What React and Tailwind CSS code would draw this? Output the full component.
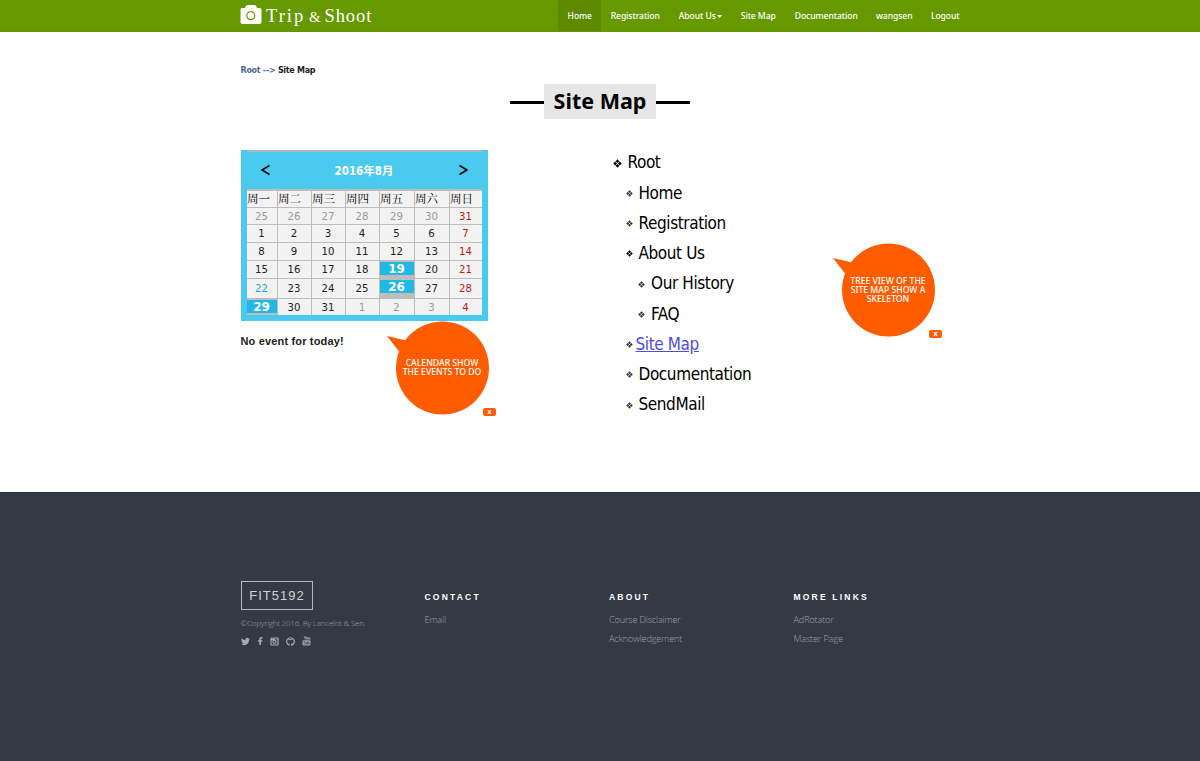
import { FaTwitter, FaFacebookF } from "react-icons/fa";

const NAV = [
  ["Home", "w-[43px] bg-[#5c8a00]"],
  ["Registration", "w-[68px]"],
  ["About Us", "w-[62px]"],
  ["Site Map", "w-[54px]"],
  ["Documentation", "w-[82px]"],
  ["wangsen", "w-[54px]"],
  ["Logout", "w-[48px]"],
];

const WEEKS = [
  { h: "h-[16px]", days: [25, 26, 27, 28, 29, 30, 31] },
  { h: "h-[17px]", days: [1, 2, 3, 4, 5, 6, 7] },
  { h: "h-[17px]", days: [8, 9, 10, 11, 12, 13, 14] },
  { h: "h-[17px]", days: [15, 16, 17, 18, 19, 20, 21] },
  { h: "h-[19px]", days: [22, 23, 24, 25, 26, 27, 28] },
  { h: "h-[16px]", days: [29, 30, 31, 1, 2, 3, 4] },
];
const HEAD = ["周一", "周二", "周三", "周四", "周五", "周六", "周日"];
const EVENTS = ["3-4", "4-4", "5-0"];

function dayClass(w, d) {
  if (d === 6) return "text-[#c01818]";
  if ((w === 0 && d < 6) || (w === 5 && d > 2)) return "text-[#999]";
  if (w === 4 && d === 0) return "text-[#1ba5dc]";
  return "text-[#222]";
}

function Calendar() {
  return (
    <div className="flex h-[171px] w-[247px] flex-col bg-[#4bcaf0] pl-[6px] pr-[6px]">
      <div className="h-[1.500px] bg-[#a9b9bf]" />
      <div className="flex h-[37.500px] items-center justify-between px-[12px]">
        <svg className="h-[12px] w-[13px]" viewBox="0 0 13 12" fill="none" stroke="#000" strokeWidth="1.5">
          <path d="M10.500 1.500 3 6l7.500 4.500" />
        </svg>
        <span className="pt-[2px] text-[11.500px] font-bold text-white [font-family:'DejaVu_Sans_Condensed','DejaVu_Sans','Noto_Sans_CJK_SC',sans-serif]">
          2016年8月
        </span>
        <svg className="h-[12px] w-[13px]" viewBox="0 0 13 12" fill="none" stroke="#000" strokeWidth="1.5">
          <path d="M2.500 1.500 10 6l-7.500 4.500" />
        </svg>
      </div>
      <div className="flex flex-col gap-px bg-[#bdbdbd] pt-[2px]">
        <div className="grid h-[16px] grid-cols-[30px_33px_33px_33px_34px_34px_32px] gap-x-px">
          {HEAD.map((h) => (
            <div key={h} className="flex items-center overflow-hidden whitespace-nowrap bg-[#f2f2f2] pl-[0.500px] text-[11.500px] leading-none text-black [font-family:'Noto_Serif_CJK_SC','Noto_Sans_CJK_SC',sans-serif]">
              {h}
            </div>
          ))}
        </div>
        {WEEKS.map((wk, w) => (
          <div key={w} className={"grid grid-cols-[30px_33px_33px_33px_34px_34px_32px] gap-x-px " + wk.h}>
            {wk.days.map((n, d) =>
              EVENTS.includes(w + "-" + d) ? (
                <div key={d} className="flex flex-col pt-[1px]">
                  <div className="flex h-[13px] items-center justify-center bg-[#22b8e6] text-[12px] font-bold leading-none text-white [font-family:'DejaVu_Sans',sans-serif]">
                    {n}
                  </div>
                </div>
              ) : (
                <div key={d} className={"flex items-center justify-center bg-[#f2f2f2] pt-[1px] text-[11.300px] leading-none [font-family:'DejaVu_Sans_Condensed','DejaVu_Sans',sans-serif] " + dayClass(w, d)}>
                  {n}
                </div>
              )
            )}
          </div>
        ))}
      </div>
    </div>
  );
}

function Bubble({ text }) {
  return (
    <div className="relative h-[95px] w-[110px]">
      <svg className="absolute inset-0 h-[95px] w-[110px]" viewBox="0 0 110 95" fill="#ff5c00">
        <circle cx="55.500" cy="47" r="46.500" />
        <path d="M0 15 19 19.500 12 30.500z" />
      </svg>
      <div className="absolute inset-y-0 left-[5.500px] flex w-[100px] items-center justify-center pb-[1px] text-[8.650px] font-medium text-white [font-family:'Noto_Sans',sans-serif]">
        <p className="whitespace-pre text-center leading-[9px]">{text}</p>
      </div>
      <div className="absolute left-[96.500px] top-[87px] flex h-[8px] w-[13px] items-center justify-center rounded-[2px] bg-[#ff5c00] pb-px text-[7px] font-bold leading-none text-white [font-family:'Noto_Sans',sans-serif]">
        x
      </div>
    </div>
  );
}

const TREE = [
  ["Root", "pl-[12px]", "gap-[6px]"],
  ["Home", "pl-[25px]", "gap-[6px]"],
  ["Registration", "pl-[25px]", "gap-[6px]"],
  ["About Us", "pl-[25px]", "gap-[6px]"],
  ["Our History", "pl-[37.500px]", "gap-[6px]"],
  ["FAQ", "pl-[37.500px]", "gap-[6px]"],
  ["Site Map", "pl-[25px]", "gap-[3px]"],
  ["Documentation", "pl-[25px]", "gap-[6px]"],
  ["SendMail", "pl-[25px]", "gap-[6px]"],
];

function Bullet({ big, dark }) {
  return (
    <svg className={big ? "h-[9px] w-[9px]" : "h-[7px] w-[7px]"} viewBox="0 0 10 10" fill={dark ? "#000" : "#333"}>
      <path d="M5 .3 7.100 2.400 5 4.500 2.900 2.400zM5 5.500l2.100 2.100L5 9.700 2.900 7.600zM2.400 2.900 4.500 5 2.400 7.100.3 5zM7.600 2.900 9.700 5 7.600 7.100 5.500 5z" />
    </svg>
  );
}

function Tree() {
  return (
    <ul className="-mt-[2px] flex flex-col">
      {TREE.map(([t, pad, gap], i) => (
        <li key={t} className={"flex h-[30.250px] items-center whitespace-nowrap text-[17px] tracking-[-0.400px] [font-family:'DejaVu_Sans_Condensed','DejaVu_Sans',sans-serif] " + pad + " " + gap}>
          <Bullet big={i === 0} dark={i === 0 || i === 3} />
          <span className={i === 6 ? "text-[#4d4de0] underline" : "text-black"}>{t}</span>
        </li>
      ))}
    </ul>
  );
}

function FooterColumn({ title, links }) {
  return (
    <div className="w-[184.500px] pt-[10px]">
      <h4 className="text-[8.500px] font-bold leading-[12px] tracking-[2.200px] text-white [font-family:'Liberation_Sans',sans-serif]">{title}</h4>
      <div className="flex flex-col pt-[7px]">
        {links.map((l) => (
          <a key={l} className="text-[9.200px] font-light leading-[19px] tracking-[-0.180px] text-[#9ca1a9] [font-family:'Open_Sans',sans-serif]">{l}</a>
        ))}
      </div>
    </div>
  );
}

function SocialIcons() {
  return (
    <div className="flex items-center pt-[7px] text-[#a6aab0]">
      <FaTwitter size={9} />
      <FaFacebookF size={8.500} className="ml-[6px]" />
      <svg className="ml-[6px] h-[9px] w-[9px]" viewBox="0 0 9 9" fill="none" stroke="currentColor">
        <rect x="1" y="1" width="7" height="7" rx=".5" strokeWidth="1.200" />
        <path d="M1 2.500h4.500M7 2h1" strokeWidth="1.500" />
        <circle cx="4.500" cy="4.800" r="1.600" strokeWidth="1.100" />
      </svg>
      <svg className="ml-[7px] h-[9px] w-[9px]" viewBox="0 0 9 9" fill="none" stroke="currentColor">
        <path d="M3.200 8.100A3.800 3.800 0 1 1 5.800 8.100V6.600" strokeWidth="1.200" />
        <path d="M3.200 8.100V6.600M2.300 2 3.500 2.500h2L6.700 2" strokeWidth="1" />
      </svg>
      <svg className="ml-[7px] h-[10px] w-[9px]" viewBox="0 0 9 10">
        <path d="M2 .2l1 1.800v1.500M4 .2 3 2M4.500 1.500v1.700h1.200V1.500zM6.700 1.300v2h1.200v-2" fill="none" stroke="currentColor" strokeWidth=".8" />
        <rect x=".5" y="4.300" width="8" height="5.200" rx="1" fill="currentColor" />
        <path d="M1.400 5.500h1.800M2.300 5.500v3M3.800 6.200v2h1v-2M5.700 5.200v3h1.500v-2H5.700" fill="none" stroke="#333a46" strokeWidth=".6" />
      </svg>
    </div>
  );
}

export default function App() {
  return (
    <div className="h-[761px] w-[1200px] overflow-hidden bg-white">
      <header className="flex h-[32px] border-b border-[#629400] bg-[#669900] pl-[240px]">
        <div className="flex w-[318px] items-center pb-[1px]">
          <svg className="h-[20px] w-[22px]" viewBox="0 0 22 20">
            <path fill="#fff" d="M2.500 3H5l1-2q.5-1 1.500-1h7q1 0 1.500 1l1 2h2.500q2 0 2 2v12q0 2-2 2h-17q-2 0-2-2V5q0-2 2-2z" />
            <circle cx="10.800" cy="10.700" r="4" fill="none" stroke="#669900" strokeWidth="1.200" />
          </svg>
          <div className="flex items-baseline whitespace-nowrap pl-[4px] pt-[3px] text-[18.500px] text-white [font-family:'Liberation_Serif',serif]">
            <span className="w-[43px] tracking-[2px]">Trip</span>
            <span className="w-[15.500px] text-[15px]">&amp;</span>
            <span className="tracking-[0.900px]">Shoot</span>
          </div>
        </div>
        <nav className="flex">
          {NAV.map(([t, c]) => (
            <a key={t} className={"flex items-center justify-center whitespace-nowrap pl-[0.500px] pt-[1px] text-[8.600px] font-medium tracking-[-0.080px] text-white [font-family:'Noto_Sans',sans-serif] " + c}>
              {t}
              {t === "About Us" && (
                <svg className="ml-[1px] h-[3px] w-[5px]" viewBox="0 0 5 3" fill="#fff"><path d="M0 0h5L2.500 3z" /></svg>
              )}
            </a>
          ))}
        </nav>
      </header>

      <main className="flex h-[460px] flex-col px-[240.500px]">
        <div className="flex h-[52px] items-center pt-[25px] text-[8px] font-bold leading-none tracking-[-0.280px] text-[#222] [font-family:'DejaVu_Sans',sans-serif]">
          <span className="whitespace-pre text-[#4a6a96]">Root --&gt; </span>
          <span>Site Map</span>
        </div>
        <div className="flex h-[35px] items-center justify-center">
          <div className="mt-[1px] h-[3px] w-[34px] bg-black" />
          <h1 className="flex h-[35px] w-[112px] items-center justify-center whitespace-nowrap bg-[#e6e6e6] pb-[1px] text-[21.500px] font-bold text-black [font-family:'Noto_Sans',sans-serif]">Site Map</h1>
          <div className="mt-[1px] h-[3px] w-[34px] bg-black" />
        </div>
        <div className="flex pt-[31px]">
          <div className="w-[360px]">
            <Calendar />
            <div className="flex">
              <p className="w-[146px] pt-[12px] text-[11px] font-bold leading-[16px] tracking-[0.160px] text-[#222] [font-family:'Liberation_Sans',sans-serif]">No event for today!</p>
              <Bubble text={"CALENDAR SHOW\nTHE EVENTS TO DO"} />
            </div>
          </div>
          <div className="w-[232px]"><Tree /></div>
          <div className="pt-[93px]">
            <Bubble text={"TREE VIEW OF THE\nSITE MAP SHOW A\nSKELETON"} />
          </div>
        </div>
      </main>

      <footer className="flex h-[269px] border-t border-[#2c323b] bg-[#333a46] pl-[240.500px] pt-[88px]">
        <div className="w-[184px]">
          <div className="flex h-[29px] w-[72px] items-center justify-center border-[1.500px] border-[#b5b8bd] pl-[1px] text-[13px] tracking-[1px] text-[#d0d2d4] [font-family:'Liberation_Sans',sans-serif]">FIT5192</div>
          <p className="whitespace-nowrap pt-[7px] text-[8px] font-light leading-[12px] tracking-[-0.200px] text-[#9ca1a9] [font-family:'Open_Sans',sans-serif]">©Copyright 2016. By Lancelot &amp; Sen.</p>
          <SocialIcons />
        </div>
        <FooterColumn title="CONTACT" links={["Email"]} />
        <FooterColumn title="ABOUT" links={["Course Disclaimer", "Acknowledgement"]} />
        <FooterColumn title="MORE LINKS" links={["AdRotator", "Master Page"]} />
      </footer>
    </div>
  );
}
